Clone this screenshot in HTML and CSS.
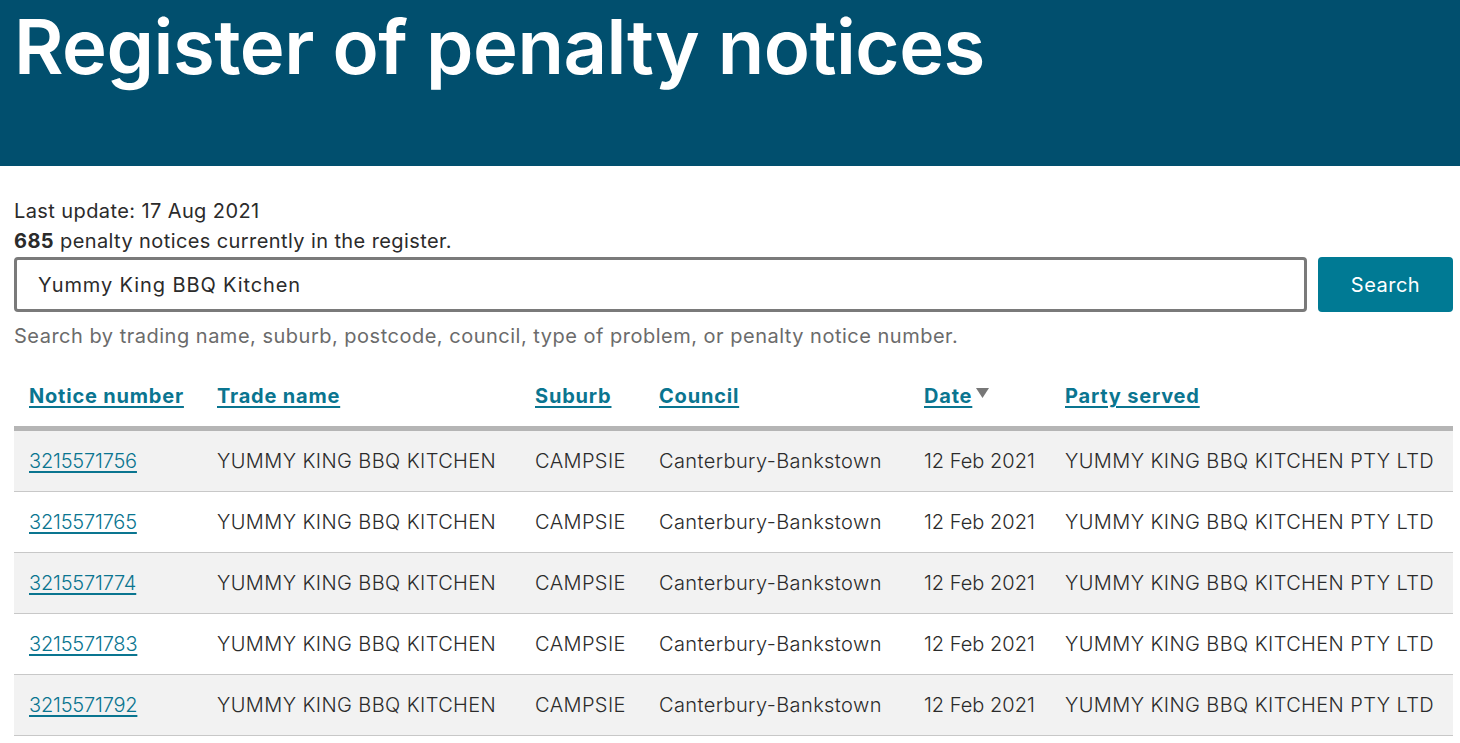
FILE: index.html
```html
<!DOCTYPE html>
<html lang="en">
<head>
    <meta charset="UTF-8">
    <meta name="viewport" content="width=device-width, initial-scale=1.0">
    <title>Register of penalty notices</title>
    <link rel="stylesheet" href="styles.css">
</head>
<body>
    <header class="page-banner">
        <h1>Register of penalty notices</h1>
    </header>

    <main class="register">
        <p class="meta">Last update: 17 Aug 2021</p>
        <p class="meta"><strong>685</strong> penalty notices currently in the register.</p>

        <form class="search-form" onsubmit="return false">
            <input class="search-input" type="text" value="Yummy King BBQ Kitchen" aria-label="Search">
            <button class="btn" type="submit">Search</button>
        </form>
        <p class="hint">Search by trading name, suburb, postcode, council, type of problem, or penalty notice number.</p>

        <table class="notices">
            <colgroup>
                <col class="col-notice">
                <col class="col-trade">
                <col class="col-suburb">
                <col class="col-council">
                <col class="col-date">
                <col class="col-party">
            </colgroup>
            <thead>
                <tr>
                    <th><a href="#">Notice number</a></th>
                    <th><a href="#">Trade name</a></th>
                    <th><a href="#">Suburb</a></th>
                    <th><a href="#">Council</a></th>
                    <th>
                        <a href="#">Date</a><svg class="sort-arrow" width="13" height="10" viewBox="0 0 13 10" aria-hidden="true"><polygon points="0,0 13,0 6.5,10" fill="currentColor"/></svg>
                    </th>
                    <th><a href="#">Party served</a></th>
                </tr>
            </thead>
            <tbody>
                <tr>
                    <td><a href="#">3215571756</a></td>
                    <td>YUMMY KING BBQ KITCHEN</td>
                    <td>CAMPSIE</td>
                    <td>Canterbury-Bankstown</td>
                    <td class="date">12 Feb 2021</td>
                    <td>YUMMY KING BBQ KITCHEN PTY LTD</td>
                </tr>
                <tr>
                    <td><a href="#">3215571765</a></td>
                    <td>YUMMY KING BBQ KITCHEN</td>
                    <td>CAMPSIE</td>
                    <td>Canterbury-Bankstown</td>
                    <td class="date">12 Feb 2021</td>
                    <td>YUMMY KING BBQ KITCHEN PTY LTD</td>
                </tr>
                <tr>
                    <td><a href="#">3215571774</a></td>
                    <td>YUMMY KING BBQ KITCHEN</td>
                    <td>CAMPSIE</td>
                    <td>Canterbury-Bankstown</td>
                    <td class="date">12 Feb 2021</td>
                    <td>YUMMY KING BBQ KITCHEN PTY LTD</td>
                </tr>
                <tr>
                    <td><a href="#">3215571783</a></td>
                    <td>YUMMY KING BBQ KITCHEN</td>
                    <td>CAMPSIE</td>
                    <td>Canterbury-Bankstown</td>
                    <td class="date">12 Feb 2021</td>
                    <td>YUMMY KING BBQ KITCHEN PTY LTD</td>
                </tr>
                <tr>
                    <td><a href="#">3215571792</a></td>
                    <td>YUMMY KING BBQ KITCHEN</td>
                    <td>CAMPSIE</td>
                    <td>Canterbury-Bankstown</td>
                    <td class="date">12 Feb 2021</td>
                    <td>YUMMY KING BBQ KITCHEN PTY LTD</td>
                </tr>
            </tbody>
        </table>
    </main>
</body>
</html>
```

FILE: styles.css
```css
:root {
    --banner-bg: #014f6e;
    --link-color: #0a7590;
    --btn-bg: #007a94;
    --text-primary: #2b2b2b;
    --text-muted: #6b6b6b;
    --row-alt: #f2f2f2;
    --row-border: #c8c8c8;
    --head-border: #b5b5b5;
    --font-main: 'Inter', 'Noto Sans', sans-serif;
}

body {
    margin: 0;
    font-family: var(--font-main);
    color: var(--text-primary);
    background: #fff;
    font-size: 20px;
    line-height: 30px;
    letter-spacing: 0.4px;
}

.page-banner {
    background-color: var(--banner-bg);
    height: 166px;
    box-sizing: border-box;
    padding: 0 14px;
}

.page-banner h1 {
    margin: 0;
    color: #fff;
    font-size: 76px;
    font-weight: 600;
    line-height: normal;
    letter-spacing: -0.5px;
}

.register {
    padding: 30px 7px 0 14px;
}

.meta {
    margin: 0;
}

.meta strong {
    font-weight: 700;
}

.search-form {
    display: flex;
    gap: 11px;
    margin-top: 1px;
}

.search-input {
    flex: 1;
    height: 55px;
    box-sizing: border-box;
    border: 3px solid #7a7a7a;
    border-radius: 4px;
    padding: 0 21px;
    font-family: var(--font-main);
    font-size: 20px;
    letter-spacing: 0.9px;
    color: var(--text-primary);
    outline: none;
}

.btn {
    width: 135px;
    height: 55px;
    border: none;
    border-radius: 4px;
    background-color: var(--btn-bg);
    color: #fff;
    font-family: var(--font-main);
    font-size: 20px;
    letter-spacing: 0.5px;
    cursor: pointer;
}

.hint {
    margin: 9px 0 0;
    color: var(--text-muted);
    letter-spacing: 0.5px;
}

.notices {
    width: 100%;
    margin-top: 15px;
    border-collapse: collapse;
    table-layout: fixed;
}

.col-notice { width: 188px; }
.col-trade { width: 318px; }
.col-suburb { width: 124px; }
.col-council { width: 265px; }
.col-date { width: 141px; }
.col-party { width: 403px; }

.notices th,
.notices td {
    padding: 15px;
    text-align: left;
    white-space: nowrap;
    vertical-align: middle;
}

.notices th {
    font-weight: 700;
    letter-spacing: 0.8px;
    border-bottom: 5px solid var(--head-border);
}

.notices th a {
    color: var(--link-color);
    text-decoration-thickness: 2px;
    text-underline-offset: 3px;
}

.sort-arrow {
    color: #777;
    margin-left: 4px;
    vertical-align: 5px;
}

.notices td {
    font-weight: 300;
    border-bottom: 1px solid var(--row-border);
}

.notices td.date {
    letter-spacing: 0;
}

.notices tbody tr:nth-child(odd) {
    background-color: var(--row-alt);
}

.notices td a {
    color: var(--link-color);
    letter-spacing: -0.2px;
    text-underline-offset: 3px;
}
```
